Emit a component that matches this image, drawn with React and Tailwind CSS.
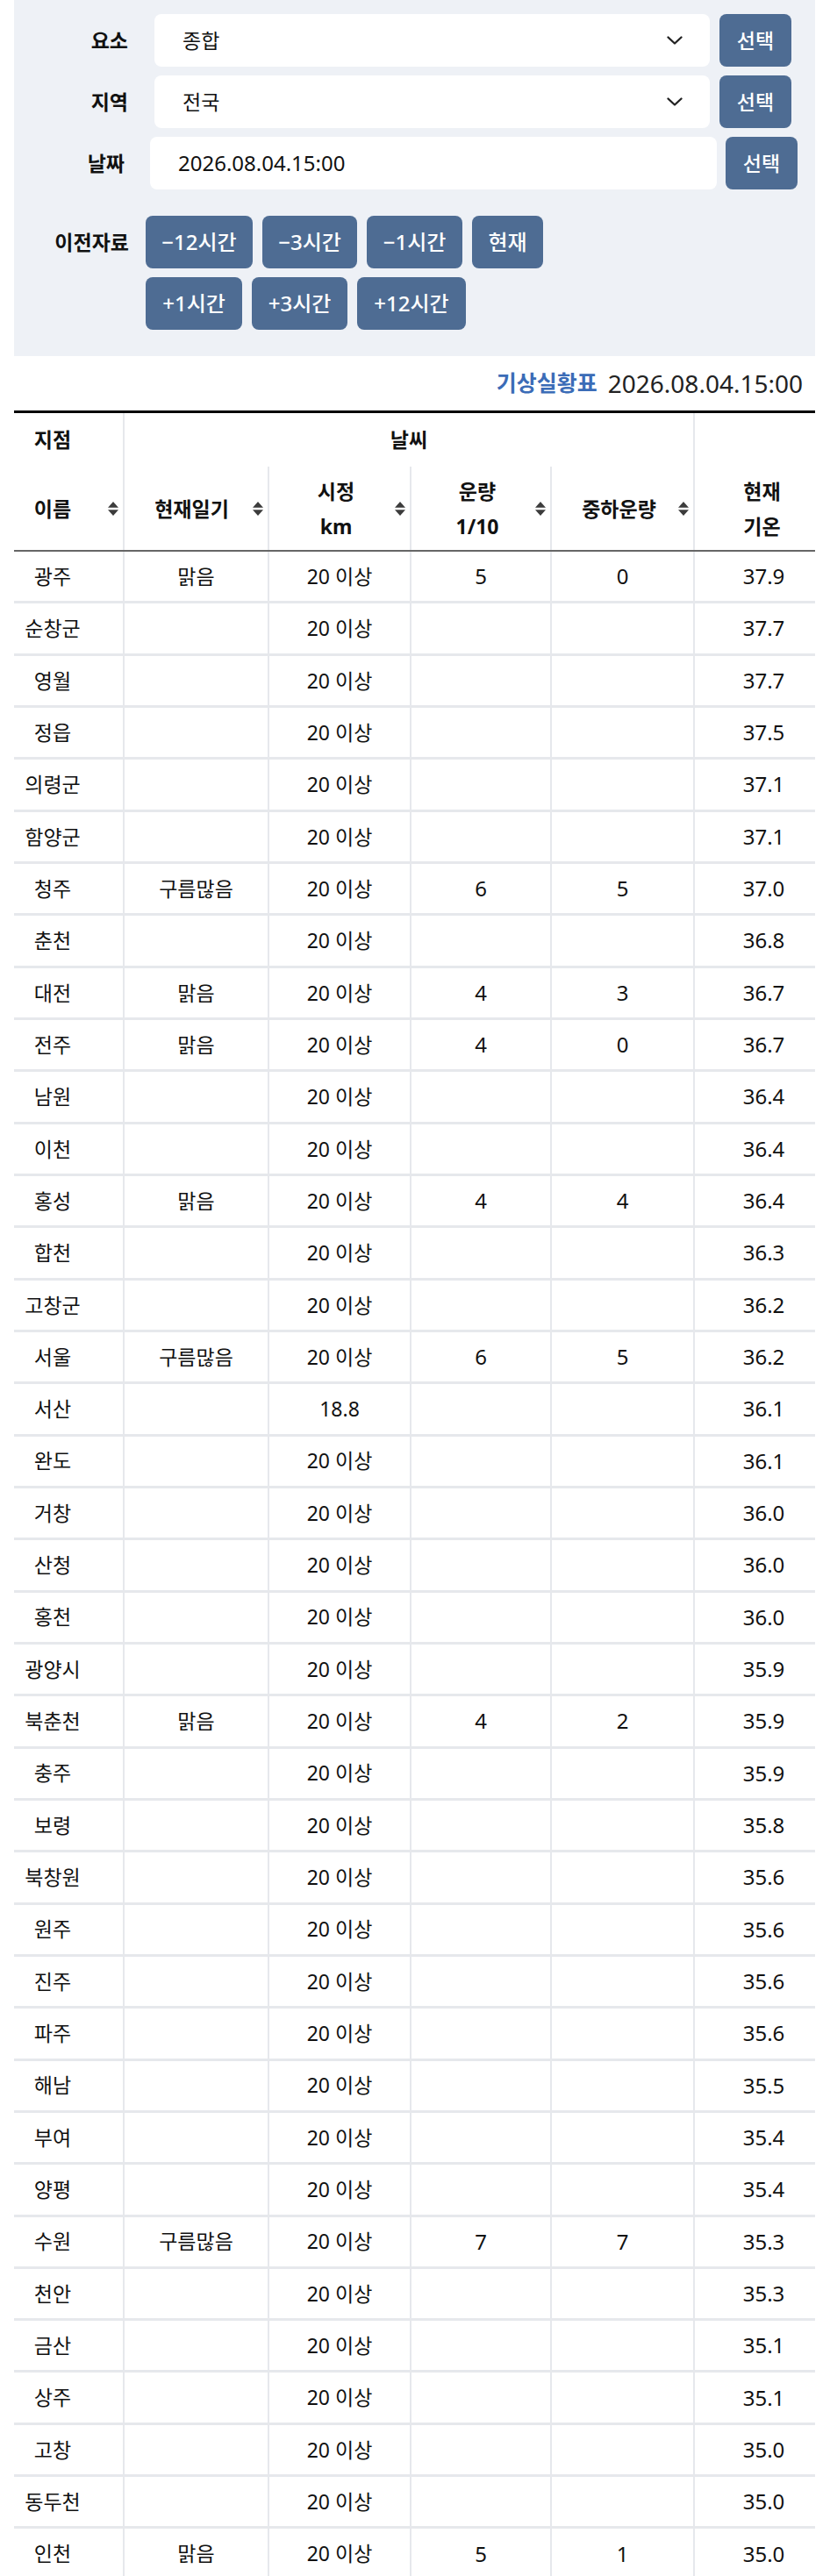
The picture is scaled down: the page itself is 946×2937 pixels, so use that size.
import React from "react";

const rows = [
  ["광주", "맑음", "20 이상", "5", "0", "37.9"],
  ["순창군", "", "20 이상", "", "", "37.7"],
  ["영월", "", "20 이상", "", "", "37.7"],
  ["정읍", "", "20 이상", "", "", "37.5"],
  ["의령군", "", "20 이상", "", "", "37.1"],
  ["함양군", "", "20 이상", "", "", "37.1"],
  ["청주", "구름많음", "20 이상", "6", "5", "37.0"],
  ["춘천", "", "20 이상", "", "", "36.8"],
  ["대전", "맑음", "20 이상", "4", "3", "36.7"],
  ["전주", "맑음", "20 이상", "4", "0", "36.7"],
  ["남원", "", "20 이상", "", "", "36.4"],
  ["이천", "", "20 이상", "", "", "36.4"],
  ["홍성", "맑음", "20 이상", "4", "4", "36.4"],
  ["합천", "", "20 이상", "", "", "36.3"],
  ["고창군", "", "20 이상", "", "", "36.2"],
  ["서울", "구름많음", "20 이상", "6", "5", "36.2"],
  ["서산", "", "18.8", "", "", "36.1"],
  ["완도", "", "20 이상", "", "", "36.1"],
  ["거창", "", "20 이상", "", "", "36.0"],
  ["산청", "", "20 이상", "", "", "36.0"],
  ["홍천", "", "20 이상", "", "", "36.0"],
  ["광양시", "", "20 이상", "", "", "35.9"],
  ["북춘천", "맑음", "20 이상", "4", "2", "35.9"],
  ["충주", "", "20 이상", "", "", "35.9"],
  ["보령", "", "20 이상", "", "", "35.8"],
  ["북창원", "", "20 이상", "", "", "35.6"],
  ["원주", "", "20 이상", "", "", "35.6"],
  ["진주", "", "20 이상", "", "", "35.6"],
  ["파주", "", "20 이상", "", "", "35.6"],
  ["해남", "", "20 이상", "", "", "35.5"],
  ["부여", "", "20 이상", "", "", "35.4"],
  ["양평", "", "20 이상", "", "", "35.4"],
  ["수원", "구름많음", "20 이상", "7", "7", "35.3"],
  ["천안", "", "20 이상", "", "", "35.3"],
  ["금산", "", "20 이상", "", "", "35.1"],
  ["상주", "", "20 이상", "", "", "35.1"],
  ["고창", "", "20 이상", "", "", "35.0"],
  ["동두천", "", "20 이상", "", "", "35.0"],
  ["인천", "맑음", "20 이상", "5", "1", "35.0"],
];

const Chevron = () => (
  <svg width="18" height="10" viewBox="0 0 18 10" fill="none">
    <path d="M1.5 1.5L9 8.5L16.5 1.5" stroke="#222" strokeWidth="2.3" strokeLinecap="round" strokeLinejoin="round" />
  </svg>
);

const Sort = () => (
  <svg width="14" height="17" viewBox="0 0 14 17" className="absolute right-[4px] top-1/2 -translate-y-1/2">
    <path d="M7 0.5L13 7.2H1Z" fill="#3c3c3c" />
    <path d="M1 9.8H13L7 16.5Z" fill="#3c3c3c" />
  </svg>
);

const cols = "grid grid-cols-[124px_165px_162px_160px_163px_1fr]";
const line = "border-l-2 border-[#e6e8ec]";

const App = () => {
  return (
    <div className="min-h-screen bg-white pl-4 pr-[17px] font-['Noto_Sans','Noto_Sans_CJK_KR',sans-serif] text-[#111]">
      {/* 검색 패널 */}
      <div className="bg-[#eef1f6] pt-4 pb-[30px]">
        <div className="flex h-[60px] items-center pr-[27px]">
          <div className="w-[160px] pr-[30px] text-right text-[23px] font-bold">요소</div>
          <div className="flex h-full flex-1 items-center justify-between rounded-lg bg-white pl-8 pr-[31px] text-[23px]">
            <span>종합</span>
            <Chevron />
          </div>
          <button className="ml-[11px] h-full w-[82px] rounded-lg bg-[#4e6c93] text-[23px] font-medium text-white">선택</button>
        </div>
        <div className="mt-[10px] flex h-[60px] items-center pr-[27px]">
          <div className="w-[160px] pr-[30px] text-right text-[23px] font-bold">지역</div>
          <div className="flex h-full flex-1 items-center justify-between rounded-lg bg-white pl-8 pr-[31px] text-[23px]">
            <span>전국</span>
            <Chevron />
          </div>
          <button className="ml-[11px] h-full w-[82px] rounded-lg bg-[#4e6c93] text-[23px] font-medium text-white">선택</button>
        </div>
        <div className="mt-[10px] flex h-[60px] items-center pr-[20px]">
          <div className="w-[155px] pr-[29px] text-right text-[23px] font-bold">날짜</div>
          <div className="flex h-full flex-1 items-center rounded-lg bg-white pl-8 text-[24px]">2026.08.04.15:00</div>
          <button className="ml-[10px] h-full w-[82px] rounded-lg bg-[#4e6c93] text-[23px] font-medium text-white">선택</button>
        </div>
        <div className="mt-[30px] flex items-start">
          <div className="flex h-[60px] w-[150px] items-center justify-end pr-[19px] text-[23px] font-bold">이전자료</div>
          <div className="flex flex-col gap-[10px] text-[24px] font-medium text-white">
            <div className="flex gap-[11px]">
              <button className="h-[60px] w-[122px] rounded-lg bg-[#4e6c93]">−12시간</button>
              <button className="h-[60px] w-[108px] rounded-lg bg-[#4e6c93]">−3시간</button>
              <button className="h-[60px] w-[109px] rounded-lg bg-[#4e6c93]">−1시간</button>
              <button className="h-[60px] w-[81px] rounded-lg bg-[#4e6c93]">현재</button>
            </div>
            <div className="flex gap-[11px]">
              <button className="h-[60px] w-[110px] rounded-lg bg-[#4e6c93]">+1시간</button>
              <button className="h-[60px] w-[109px] rounded-lg bg-[#4e6c93]">+3시간</button>
              <button className="h-[60px] w-[124px] rounded-lg bg-[#4e6c93]">+12시간</button>
            </div>
          </div>
        </div>
      </div>

      {/* 제목 */}
      <div className="flex h-[62px] items-center justify-end pr-[14px]">
        <span className="text-[25px] font-bold text-[#3b6cb7]">기상실황표</span>
        <span className="ml-[12px] text-[28px] text-[#222]">2026.08.04.15:00</span>
      </div>

      {/* 표 */}
      <div className="border-t-[3px] border-black">
        <div className={`${cols} h-[61px] text-[23px] font-bold`}>
          <div className="flex items-center justify-center pl-2 pr-[44px]">지점</div>
          <div className={`col-span-4 flex items-center justify-center ${line}`}>날씨</div>
          <div className={line}></div>
        </div>
        <div className={`${cols} h-[97px] border-b-2 border-[#666] text-[23px] font-bold leading-[40px]`}>
          <div className="relative flex items-center justify-center pl-2 pr-[44px]">
            이름
            <Sort />
          </div>
          <div className={`relative flex items-center justify-center pr-[10px] ${line}`}>
            현재일기
            <Sort />
          </div>
          <div className={`relative flex flex-col items-center justify-center pr-[8px] ${line}`}>
            <span>시정</span>
            <span>km</span>
            <Sort />
          </div>
          <div className={`relative flex flex-col items-center justify-center pr-[8px] ${line}`}>
            <span>운량</span>
            <span>1/10</span>
            <Sort />
          </div>
          <div className={`relative flex items-center justify-center pr-[8px] ${line}`}>
            중하운량
            <Sort />
          </div>
          <div className={`flex flex-col items-center justify-center pl-[16px] ${line}`}>
            <span>현재</span>
            <span>기온</span>
          </div>
        </div>
        {rows.map((r, i) => (
          <div key={i} className={`${cols} h-[59.33px] border-b-[3px] border-[#e6e8ec] text-[23px]`}>
            <div className="flex items-center justify-center pl-2 pr-[44px]">{r[0]}</div>
            <div className={`flex items-center justify-center ${line}`}>{r[1]}</div>
            <div className={`flex items-center justify-center ${line}`}>{r[2]}</div>
            <div className={`flex items-center justify-center text-[24px] ${line}`}>{r[3]}</div>
            <div className={`flex items-center justify-center text-[24px] ${line}`}>{r[4]}</div>
            <div className={`flex items-center justify-center pl-[20px] text-[24px] ${line}`}>{r[5]}</div>
          </div>
        ))}
      </div>
    </div>
  );
};

export default App;
